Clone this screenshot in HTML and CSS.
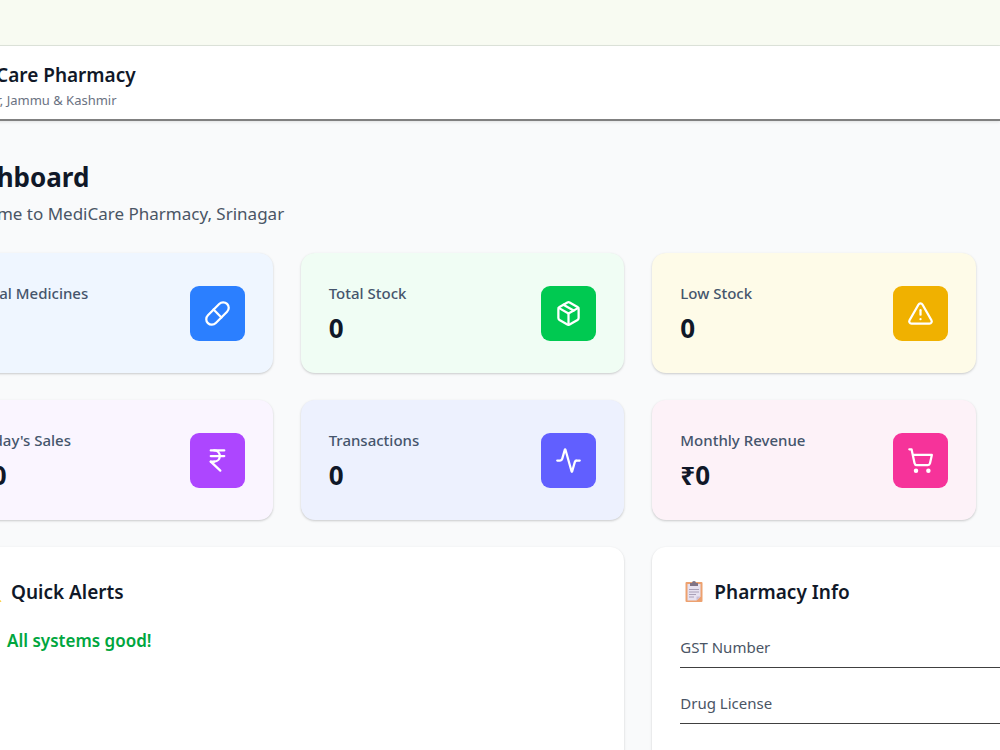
FILE: index.html
```html
<!DOCTYPE html>
<html lang="en">
<head>
<meta charset="utf-8">
<meta name="viewport" content="width=device-width, initial-scale=1">
<title>MediCare Pharmacy</title>
<link rel="stylesheet" href="styles.css">
</head>
<body>
<div class="strip"></div>
<header class="header">
  <p class="brand">MediCare Pharmacy</p>
  <p class="place">Srinagar, Jammu &amp; Kashmir</p>
</header>
<main class="main">
  <h1 class="title">Dashboard</h1>
  <p class="welcome">Welcome to MediCare Pharmacy, Srinagar</p>
  <section class="stats">
    <article class="card stat blue">
      <div><h2 class="label">Total Medicines</h2><p class="value">0</p></div>
      <span class="tile"><svg class="icon" viewBox="0 0 24 24"><path d="m10.5 20.5 10-10a4.95 4.95 0 1 0-7-7l-10 10a4.95 4.95 0 1 0 7 7Z"/><path d="m8.5 8.5 7 7"/></svg></span>
    </article>
    <article class="card stat green">
      <div><h2 class="label">Total Stock</h2><p class="value">0</p></div>
      <span class="tile"><svg class="icon" viewBox="0 0 24 24"><path d="M11 21.73a2 2 0 0 0 2 0l7-4A2 2 0 0 0 21 16V8a2 2 0 0 0-1-1.73l-7-4a2 2 0 0 0-2 0l-7 4A2 2 0 0 0 3 8v8a2 2 0 0 0 1 1.73z"/><path d="M12 22V12"/><path d="m3.3 7 8.7 5 8.7-5"/><path d="m7.5 4.27 9 5.15"/></svg></span>
    </article>
    <article class="card stat yellow">
      <div><h2 class="label">Low Stock</h2><p class="value">0</p></div>
      <span class="tile"><svg class="icon" viewBox="0 0 24 24"><path d="m21.73 18-8-14a2 2 0 0 0-3.48 0l-8 14A2 2 0 0 0 4 21h16a2 2 0 0 0 1.73-3"/><path d="M12 9v4"/><path d="M12 17h.01"/></svg></span>
    </article>
    <article class="card stat purple">
      <div><h2 class="label">Today's Sales</h2><p class="value">₹0</p></div>
      <span class="tile"><svg class="icon" viewBox="0 0 24 24"><path d="M6 3h12"/><path d="M6 8h12"/><path d="m6 13 8.5 8"/><path d="M6 13h3"/><path d="M9 13c6.667 0 6.667-10 0-10"/></svg></span>
    </article>
    <article class="card stat indigo">
      <div><h2 class="label">Transactions</h2><p class="value">0</p></div>
      <span class="tile"><svg class="icon" viewBox="0 0 24 24"><path d="M22 12h-2.48a2 2 0 0 0-1.93 1.46l-2.35 8.36a.25.25 0 0 1-.48 0L9.24 2.18a.25.25 0 0 0-.48 0l-2.35 8.36A2 2 0 0 1 4.49 12H2"/></svg></span>
    </article>
    <article class="card stat pink">
      <div><h2 class="label">Monthly Revenue</h2><p class="value">₹0</p></div>
      <span class="tile"><svg class="icon" viewBox="0 0 24 24"><circle cx="8" cy="21" r="1"/><circle cx="19" cy="21" r="1"/><path d="M2.05 2.05h2l2.66 12.42a2 2 0 0 0 2 1.58h9.78a2 2 0 0 0 1.95-1.57l1.65-7.43H5.12"/></svg></span>
    </article>
  </section>
  <section class="panels">
    <article class="card panel alerts">
      <h2 class="heading"><svg class="emoji" viewBox="0 0 28 28"><path fill="#fcd34d" d="M14 4 24.500 24H3.500Z"/><path fill="#334155" d="M13 11h2v7h-2zM13 20h2v2h-2z"/></svg>Quick Alerts</h2>
      <p class="good"><svg class="check" viewBox="0 0 24 24"><rect x="2" y="2" width="20" height="20" rx="3" fill="#00a63e"/><path d="m7 12 4 4 7-8" fill="none" stroke="#fff" stroke-width="2"/></svg>All systems good!</p>
    </article>
    <article class="card panel info">
      <h2 class="heading"><svg class="emoji" viewBox="0 0 28 28"><rect x="5.500" y="4" width="17" height="20" rx="1" fill="#eda16f"/><path fill="#e7e1f0" d="M7.500 6h13v12.500l-4 4h-9z"/><path fill="#c9bfd9" d="M20.500 18.500h-4v4z"/><path fill="#807386" d="M10 8V5h2a2 2 0 0 1 4 0h2v3z"/><path stroke="#aaa0b8" d="M9 11.500h10M9 14h10M9 16.500h7M9 19h5"/></svg>Pharmacy Info</h2>
      <dl class="facts">
        <dt>GST Number</dt>
        <dt>Drug License</dt>
      </dl>
    </article>
  </section>
</main>
</body>
</html>
```
FILE: styles.css
```css
* { box-sizing: border-box; margin: 0; }

body {
  height: 100vh;
  overflow: hidden;
  background: #f9fafb;
  color: #101828;
  font-family: "Noto Sans", "Open Sans", sans-serif;
}

.strip { height: 46px; background: #f8fbf2; border-bottom: 1px solid #dfe5dc; }

.header {
  height: 75px;
  padding-top: 15px;
  margin-left: -50px;
  background: #fff;
  border-bottom: 2px solid #808080;
  box-shadow: 0 1px 3px rgb(0 0 0 / 10%);
}
.brand { font-size: 19px; font-weight: 600; line-height: 28px; }
.place { font-size: 13px; line-height: 22px; color: #6a7282; }

.main { margin-left: -51px; padding: 36px 24px 0 0; }
.title { font-size: 26px; font-weight: 700; line-height: 40px; }
.welcome { margin-top: 4px; font-size: 17px; line-height: 26px; color: #4a5565; }

.stats {
  display: grid;
  grid-template-columns: repeat(3, 1fr);
  column-gap: 28px;
  row-gap: 27px;
  margin-top: 26px;
}
.card {
  border-radius: 14px;
  box-shadow: 0 1px 3px rgb(0 0 0 / 10%), 0 1px 2px rgb(0 0 0 / 10%);
}
.stat {
  display: flex;
  justify-content: space-between;
  height: 120px;
  padding: 28px;
}
.label { font-size: 15px; font-weight: 500; line-height: 24px; color: #45556c; }
.value { margin-top: 4px; font-size: 26px; font-weight: 700; line-height: 38px; }
.tile {
  display: grid;
  place-items: center;
  align-self: center;
  width: 55px;
  height: 55px;
  border-radius: 9px;
}
.icon {
  width: 27px;
  height: 27px;
  fill: none;
  stroke: #fff;
  stroke-width: 2;
  stroke-linecap: round;
  stroke-linejoin: round;
}

.blue { background: #eff6ff; }
.blue .tile { background: #2b7fff; }
.green { background: #f0fdf4; }
.green .tile { background: #00c951; }
.yellow { background: #fefbe8; }
.yellow .tile { background: #f0b100; }
.purple { background: #faf5ff; }
.purple .tile { background: #ad46ff; }
.indigo { background: #edf1fe; }
.indigo .tile { background: #615fff; }
.pink { background: #fdf2f8; }
.pink .tile { background: #f6339a; }

.panels {
  display: grid;
  grid-template-columns: repeat(3, 1fr);
  column-gap: 28px;
  margin-top: 27px;
}
.panel { min-height: 203px; padding: 28px; background: #fff; border-radius: 14px 14px 0 0; }
.alerts { grid-column: span 2; }
.info { margin-right: -52px; }
.heading {
  display: flex;
  align-items: center;
  gap: 6px;
  font-size: 19px;
  font-weight: 600;
  line-height: 34px;
}
.emoji { width: 28px; height: 28px; }
.good {
  display: flex;
  align-items: center;
  gap: 6px;
  margin-top: 18px;
  font-size: 17px;
  font-weight: 600;
  line-height: 28px;
  color: #00a63e;
}
.check { width: 24px; height: 24px; }
.facts { margin-top: 16px; }
.facts dt {
  height: 56px;
  padding-top: 23px;
  border-bottom: 1px solid #404040;
  font-size: 15px;
  line-height: 24px;
  color: #4a5565;
}
.facts dt:first-child { height: 43px; padding-top: 10px; }
```
